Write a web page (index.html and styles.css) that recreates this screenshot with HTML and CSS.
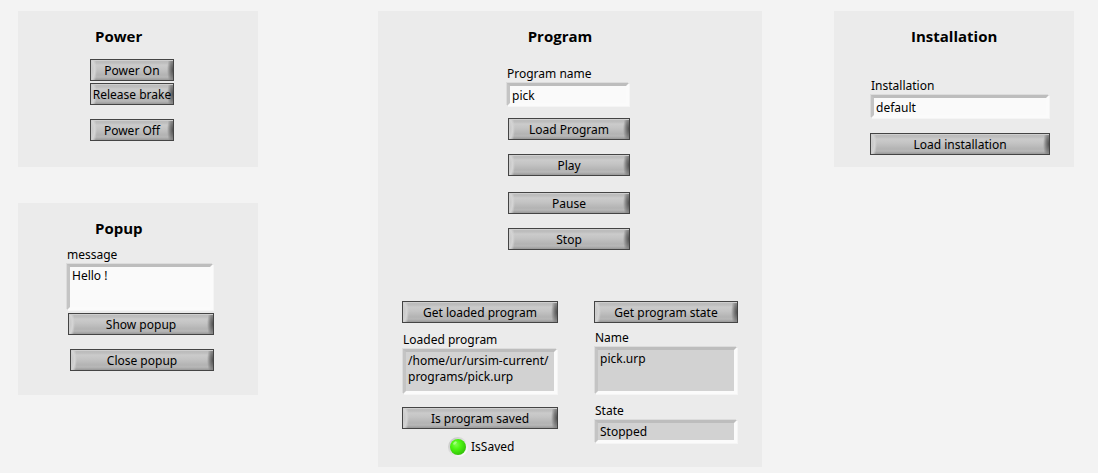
FILE: index.html
```html
<!DOCTYPE html>
<html lang="en">
<head>
<meta charset="utf-8">
<meta name="viewport" content="width=device-width, initial-scale=1">
<title>Robot dashboard</title>
<link rel="stylesheet" href="styles.css">
</head>
<body>
<main class="dashboard">
  <div class="side">
    <section class="panel power">
      <h2 class="title">Power</h2>
      <div class="power-buttons">
        <button class="btn" type="button">Power On</button>
        <button class="btn" type="button">Release brake</button>
        <button class="btn spaced" type="button">Power Off</button>
      </div>
    </section>
    <section class="panel popup">
      <h2 class="title">Popup</h2>
      <div class="popup-form">
        <label class="label" for="message">message</label>
        <textarea class="field tall" id="message">Hello !</textarea>
        <button class="btn show" type="button">Show popup</button>
        <button class="btn close" type="button">Close popup</button>
      </div>
    </section>
  </div>

  <section class="panel program">
    <h2 class="title">Program</h2>
    <div class="program-form">
      <label class="label" for="program-name">Program name</label>
      <input class="field" id="program-name" type="text" value="pick">
      <div class="program-buttons">
        <button class="btn" type="button">Load Program</button>
        <button class="btn" type="button">Play</button>
        <button class="btn pause" type="button">Pause</button>
        <button class="btn" type="button">Stop</button>
      </div>
    </div>
    <div class="status">
      <div class="status-column">
        <button class="btn" type="button">Get loaded program</button>
        <label class="label loaded-label" for="loaded">Loaded program</label>
        <output class="readout path" id="loaded">/home/ur/ursim-current/<wbr>programs/pick.urp</output>
        <button class="btn saved-button" type="button">Is program saved</button>
        <div class="led-row">
          <svg class="led" viewBox="0 0 20 20" aria-hidden="true">
            <defs>
              <radialGradient id="glow" cx="0.38" cy="0.35" r="0.65">
                <stop offset="0" stop-color="#7dff4a"/>
                <stop offset="0.45" stop-color="#4bf50f"/>
                <stop offset="1" stop-color="#35c40a"/>
              </radialGradient>
              <linearGradient id="rim" x1="0" y1="0" x2="1" y2="1">
                <stop offset="0.1" stop-color="#c6c6c6"/>
                <stop offset="0.5" stop-color="#e2e2e2"/>
                <stop offset="0.9" stop-color="#ffffff"/>
              </linearGradient>
            </defs>
            <circle cx="10" cy="10" r="10" fill="url(#rim)"/>
            <circle cx="10" cy="10" r="8" fill="url(#glow)"/>
            <ellipse cx="7" cy="6" rx="2" ry="1.3" fill="#a5ff80" transform="rotate(-35 7 6)"/>
          </svg>
          <span class="led-label">IsSaved</span>
        </div>
      </div>
      <div class="status-column">
        <button class="btn" type="button">Get program state</button>
        <label class="label name-label" for="name">Name</label>
        <output class="readout name" id="name">pick.urp</output>
        <label class="label state-label" for="state">State</label>
        <output class="readout state" id="state">Stopped</output>
      </div>
    </div>
  </section>

  <section class="panel installation">
    <h2 class="title">Installation</h2>
    <div class="installation-form">
      <label class="label" for="installation">Installation</label>
      <input class="field" id="installation" type="text" value="default">
      <button class="btn" type="button">Load installation</button>
    </div>
  </section>
</main>
</body>
</html>
```

FILE: styles.css
```css
* {
  box-sizing: border-box;
}

body {
  margin: 0;
  background: #f3f3f3;
  color: #000;
  font: 12px/16px "Noto Sans", "Open Sans", sans-serif;
}

.dashboard {
  display: grid;
  grid-template-columns: 240fr 120fr 384fr 72fr 240fr;
  align-items: start;
  padding: 11px 24px 6px 18px;
}

.side {
  grid-column: 1;
  display: grid;
  gap: 36px;
}

.program {
  grid-column: 3;
}

.installation {
  grid-column: 5;
}

.panel {
  background: #ebebeb;
  padding-top: 14px;
}

.title {
  margin: 0;
  font: bold 15px/22px "Open Sans", "Noto Sans", sans-serif;
}

.label {
  display: block;
  padding-left: 1px;
}

.btn {
  display: block;
  width: 100%;
  height: 22px;
  margin: 0;
  padding: 2px 0 0;
  border: 1px solid #444;
  font: inherit;
  line-height: 18px;
  color: #000;
  white-space: nowrap;
  background:
    radial-gradient(ellipse 6px 16px at 100% 50%, #505050 0, #808080 50%, transparent 100%) right / 6px 100% no-repeat,
    radial-gradient(ellipse 6px 16px at 0 50%, #c4c4c4 0, #d4d4d4 60%, transparent 100%) left / 6px 100% no-repeat,
    linear-gradient(#bababa 0, #bebebe 3px, #cbcbcb 5px, #c4c4c4 9px, #b3b3b3 15px, #b8b8b8 17px, #989898 20px);
  box-shadow: inset 1px 1px 0 #cfcfcf;
}

.field,
.readout {
  display: block;
  width: calc(100% - 2px);
  margin: 1px;
  border: 3px solid;
  border-color: #bdbdbd #fbfbfb #fbfbfb #c4c4c4;
  border-radius: 0;
  padding: 1px 2px 0;
  font: inherit;
  color: #000;
  overflow: hidden;
  box-shadow: 1px 1px 0 #f5f5f5, -1px -1px 0 #dcdcdc;
}

.field {
  height: 23px;
  background: #fafafa;
  outline: 0;
}

.field.tall {
  height: 46px;
  resize: none;
}

.readout {
  background: #d2d2d2;
}

/* Power */
.power {
  padding: 14px 84px 26px 72px;
}

.power .title {
  padding-left: 5px;
}

.power-buttons {
  display: grid;
  gap: 2px;
  margin-top: 12px;
}

.spaced {
  margin-top: 12px;
}

/* Popup */
.popup {
  padding: 14px 44px 24px 48px;
}

.popup .title {
  padding-left: 29px;
}

.popup-form {
  margin-top: 8px;
}

.show {
  width: auto;
  min-width: calc(100% - 2px);
  margin: 3px 0 0 auto;
}

.close {
  width: auto;
  min-width: calc(100% - 4px);
  margin: 14px 0 0 auto;
}

/* Program */
.program {
  padding: 14px 24px 10px;
}

.program .title {
  padding-right: 20px;
  text-align: center;
}

.program-form {
  width: 124px;
  margin: 19px auto 0 104px;
}

.program-buttons {
  display: grid;
  gap: 14px;
  margin: 12px 0 0 2px;
}

.pause {
  margin-top: 2px;
}

.status {
  display: grid;
  grid-template-columns: 156fr 144fr;
  gap: 36px;
  margin-top: 51px;
}

.loaded-label {
  margin-top: 9px;
}

.path {
  height: 45px;
}

.saved-button {
  margin-top: 13px;
}

.led-row {
  display: flex;
  align-items: center;
  gap: 3px;
  margin: 8px 0 0 46px;
}

.led {
  width: 20px;
  height: 20px;
}

.name-label {
  margin-top: 7px;
}

.name {
  height: 47px;
}

.state-label {
  margin-top: 9px;
}

.state {
  height: 23px;
}

/* Installation */
.installation {
  padding: 14px 24px 12px 36px;
}

.installation .title {
  padding-left: 41px;
}

.installation-form {
  margin-top: 31px;
}

.installation-form .btn {
  margin-top: 15px;
}
```
